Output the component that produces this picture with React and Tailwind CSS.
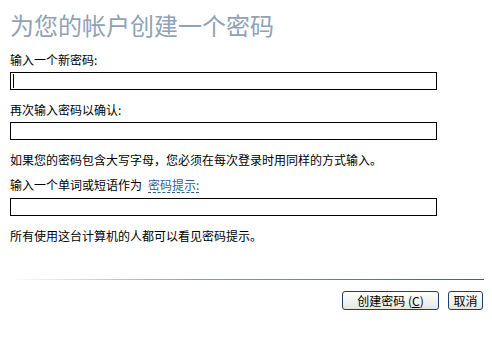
export default function App() {
  const font = { fontFamily: '"Noto Sans CJK SC", "Noto Sans", sans-serif' };
  return (
    <div className="w-[492px] h-[337px] bg-white text-black overflow-hidden" style={font}>
      <div className="pl-[10px] pr-[55px] pt-[12px] flex flex-col">
        <h1 className="text-[24px] leading-[26px] text-[#8fa2b6] font-normal tracking-[0px]">为您的帐户创建一个密码</h1>
        <div className="mt-[16px] text-[12px] leading-[12px]">输入一个新密码:</div>
        <div className="mt-[6px] h-[18px] border border-black bg-white relative">
          <div className="absolute left-[2px] top-[1px] bottom-[1px] w-[1px] bg-black"></div>
        </div>
        <div className="mt-[14px] text-[12px] leading-[12px]">再次输入密码以确认:</div>
        <div className="mt-[6px] h-[18px] border border-black bg-white"></div>
        <div className="mt-[14px] text-[12px] leading-[12px]">如果您的密码包含大写字母，您必须在每次登录时用同样的方式输入。</div>
        <div className="mt-[13px] text-[12px] leading-[12px] flex">
          <span>输入一个单词或短语作为</span>
          <span className="ml-[6px] text-[#2f5f8f] border-b border-dashed border-[#2f5f8f] pb-[1px]">密码提示:</span>
        </div>
        <div className="mt-[5px] h-[18px] border border-black bg-white"></div>
        <div className="mt-[14px] text-[12px] leading-[12px]">所有使用这台计算机的人都可以看见密码提示。</div>
      </div>
      <div className="mt-[37px] ml-[10px] w-[474px] h-[1px] bg-gradient-to-r from-white via-[#8a9ea8] via-40% to-[#46606e]"></div>
      <div className="mt-[11px] flex justify-end pr-[9px] gap-[9px]">
        <button className="w-[97px] h-[19px] rounded-[3px] border border-[#1f3f6a] bg-gradient-to-b from-white to-[#e6e6e0] text-[12px] leading-[12px] flex items-center justify-center">
          创建密码 (<span className="underline">C</span>)
        </button>
        <button className="w-[35px] h-[19px] rounded-[3px] border border-[#1f3f6a] bg-gradient-to-b from-white to-[#e6e6e0] text-[12px] leading-[12px] flex items-center justify-center">
          取消
        </button>
      </div>
    </div>
  );
}
